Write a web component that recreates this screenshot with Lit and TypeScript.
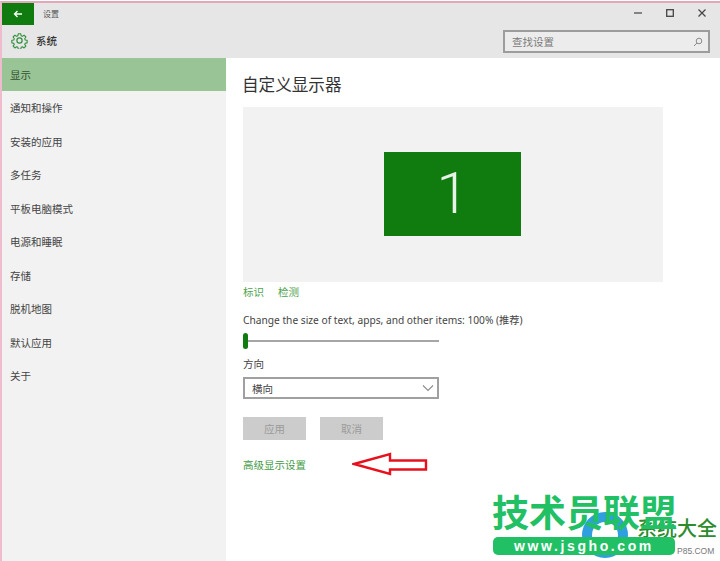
import { LitElement, html, css } from "lit";
import { customElement } from "lit/decorators.js";

const NAV = ["显示", "通知和操作", "安装的应用", "多任务", "平板电脑模式", "电源和睡眠", "存储", "脱机地图", "默认应用", "关于"];

@customElement("app-root")
export class AppRoot extends LitElement {
  static styles = css`
    :host {
      display: block;
      width: 720px;
      height: 561px;
      overflow: hidden;
      position: relative;
      background: #fff;
      font-family: "Noto Sans CJK SC", "Liberation Sans", sans-serif;
      color: #3a3a3a;
    }
    .window {
      width: 720px;
      height: 560px;
      margin-top: 1px;
      box-sizing: border-box;
      border-top: 2px solid #e3a9bb;
      border-left: 2px solid #eebccd;
      display: flex;
      flex-direction: column;
    }
    .titlebar {
      height: 55px;
      background: #e6e6e6;
      display: grid;
      grid-template-columns: 1fr 217px;
      grid-template-rows: 22px 33px;
      flex: none;
    }
    .tl { display: flex; align-items: stretch; }
    .back {
      width: 32px;
      background: #107c10;
      display: flex;
      align-items: center;
      justify-content: center;
    }
    .title { font-size: 8px; margin-left: 9px; line-height: 21px; color: #555; }
    .controls { display: flex; justify-content: flex-end; align-items: center; padding-right: 14px; gap: 24px; height: 20px; }
    .sys { display: flex; align-items: center; padding-left: 9px; gap: 8px; font-size: 10.5px; font-weight: 500; color: #333; padding-bottom: 3px; }
    .searchcell { padding-top: 5px; }
    .search {
      width: 207px;
      height: 23px;
      box-sizing: border-box;
      border: 2px solid #9c9c9c;
      background: #ececec;
      display: flex;
      align-items: center;
      justify-content: space-between;
      padding: 0 5px 0 7px;
      font-size: 10.5px;
      color: #7a7a7a;
    }
    .main { flex: 1; display: flex; min-height: 0; }
    .side { width: 224px; background: #f2f2f2; flex: none; }
    .nav {
      height: 33.5px;
      display: flex;
      align-items: center;
      padding-left: 8px;
      font-size: 10.5px;
      color: #444;
    }
    .nav.on { background: #98c496; height: 33px; color: #35502f; }
    .content { flex: 1; padding: 0 0 0 17px; display: flex; flex-direction: column; align-items: flex-start; }
    h1 { font-weight: 400; font-size: 16.6px; line-height: 24px; margin: 14px 0 11px -1px; color: #333; }
    .preview {
      width: 420px;
      height: 175px;
      background: #f2f2f2;
      display: flex;
      align-items: center;
      justify-content: center;
      flex: none;
    }
    .mon {
      width: 137px;
      height: 84px;
      margin-left: -1px;
      margin-bottom: 2px;
      background: #107c10;
      color: #e8f2e8;
      font-family: Roboto, "Liberation Sans", sans-serif;
      font-weight: 300;
      font-size: 58px;
      line-height: 82px;
      text-align: center;
    }
    .links { display: flex; gap: 14px; font-size: 10.5px; line-height: 16px; margin-top: 2px; color: #4ea24e; }
    .scale { font-family: "Noto Sans", "Noto Sans CJK SC", sans-serif; font-size: 10.2px; line-height: 16px; margin-top: 12px; color: #444; white-space: nowrap; }
    .slider { position: relative; width: 196px; height: 16px; margin-top: 5px; display: flex; align-items: center; }
    .track { width: 100%; height: 2px; background: #a6a6a6; }
    .thumb { position: absolute; left: 0; top: 0; width: 5px; height: 16px; border-radius: 3px; background: #107c10; }
    .lbl { font-size: 10.5px; line-height: 16px; margin-top: 7px; color: #444; }
    .select {
      width: 196px;
      height: 22px;
      box-sizing: border-box;
      margin-top: 5px;
      border: 2px solid #a0a0a0;
      display: flex;
      align-items: center;
      justify-content: space-between;
      padding: 0 3px 0 7px;
      font-size: 10.5px;
      color: #444;
    }
    .btns { display: flex; gap: 14px; margin-top: 18px; }
    .btn {
      width: 63px;
      height: 23px;
      background: #cccccc;
      color: #9b9b9b;
      font-size: 10.5px;
      display: flex;
      align-items: center;
      justify-content: center;
    }
    .adv { display: flex; align-items: center; margin-top: 12px; gap: 45px; font-size: 10.5px; color: #3f9a45; }
    .adv span { width: 64px; white-space: nowrap; }
    .wm { position: absolute; left: 492px; top: 493px; width: 228px; height: 68px; }
    .wm .big { position: absolute; left: 0; top: -5px; font-size: 37px; line-height: 46px; font-weight: 700; color: #22c064; white-space: nowrap; }
    .wm .pill {
      position: absolute; left: 1px; top: 44px; width: 182px; height: 18px; border-radius: 5px;
      background: #22c064; color: #fff; font-family: "Liberation Sans", sans-serif; font-size: 14px; font-weight: 700;
      letter-spacing: 2.6px; line-height: 18px; text-align: center;
    }
    .wm .blue { position: absolute; left: 0; top: 0; }
    .wm .sys2 { position: absolute; left: 145px; top: 22px; font-size: 20px; line-height: 26px; color: #2e8b2e; font-weight: 500; white-space: nowrap; }
    .wm .small { position: absolute; left: 185px; top: 52px; font-family: "Liberation Sans", sans-serif; font-size: 8.5px; line-height: 12px; color: #777; }
  `;

  render() {
    return html`
      <div class="window">
        <div class="titlebar">
          <div class="tl">
            <div class="back">
              <svg width="10" height="10" viewBox="0 0 10 10" fill="none" stroke="#fff" stroke-width="1.3"><path d="M9 5H1.500M4.500 2 1.500 5l3 3"/></svg>
            </div>
            <div class="title">设置</div>
          </div>
          <div class="controls">
            <svg width="8" height="8" viewBox="0 0 8 8"><path d="M0 4h8" stroke="#444" stroke-width="1.2"/></svg>
            <svg width="8" height="8" viewBox="0 0 8 8" fill="none"><rect x=".7" y=".7" width="6.600" height="6.600" stroke="#444" stroke-width="1.3"/></svg>
            <svg width="8" height="8" viewBox="0 0 8 8"><path d="M.5.5l7 7M7.500.5l-7 7" stroke="#444" stroke-width="1.2"/></svg>
          </div>
          <div class="sys">
            <svg width="17" height="17" viewBox="0 0 24 24" fill="none" stroke="#2f8f3a" stroke-width="1.7" stroke-linejoin="round"><circle cx="12" cy="12" r="3.700"/><path d="M10 1.500h4l.6 3.200 1.900.8 2.700-1.800 2.800 2.800-1.800 2.700.8 1.900 3 .6v4l-3 .6-.8 1.900 1.800 2.700-2.800 2.800-2.700-1.800-1.900.8-.6 3h-4l-.6-3-1.900-.8-2.700 1.800-2.800-2.800 1.800-2.700-.8-1.900-3-.6v-4l3-.6.8-1.900-1.800-2.700 2.800-2.800 2.700 1.800 1.900-.8z" transform="translate(1.200 1.200) scale(.9)"/></svg>
            <span>系统</span>
          </div>
          <div class="searchcell">
            <div class="search">
              <span>查找设置</span>
              <svg width="10" height="10" viewBox="0 0 10 10" fill="none" stroke="#8a8a8a"><circle cx="6" cy="4" r="2.800"/><path d="M4 6 1 9"/></svg>
            </div>
          </div>
        </div>
        <div class="main">
          <div class="side">
            ${NAV.map((n, i) => html`<div class="nav ${i === 0 ? "on" : ""}">${n}</div>`)}
          </div>
          <div class="content">
            <h1>自定义显示器</h1>
            <div class="preview"><div class="mon">1</div></div>
            <div class="links"><span>标识</span><span>检测</span></div>
            <div class="scale">Change the size of text, apps, and other items: 100% (推荐)</div>
            <div class="slider"><div class="track"></div><div class="thumb"></div></div>
            <div class="lbl">方向</div>
            <div class="select">
              <span>横向</span>
              <svg width="12" height="8" viewBox="0 0 12 8" fill="none" stroke="#8c8c8c" stroke-width="1.1"><path d="M1 1.500 6 6.500l5-5"/></svg>
            </div>
            <div class="btns"><div class="btn">应用</div><div class="btn">取消</div></div>
            <div class="adv">
              <span>高级显示设置</span>
              <svg width="76" height="24" viewBox="0 0 76 24" fill="#fff" stroke="#e8101c" stroke-width="2.400"><path d="M2 12 38 2v6.500h36v9H38V22z"/></svg>
            </div>
          </div>
        </div>
      </div>
      <div class="wm">
        <svg class="blue" width="228" height="68" viewBox="0 0 228 68"><circle cx="113" cy="42" r="23" fill="#2f9fe0"/><circle cx="113" cy="42" r="13" fill="#fff"/></svg>
        <div class="sys2">系统大全</div>
        <div class="big">技术员联盟</div>
        <div class="pill">www.jsgho.com</div>
        <div class="small">P85.COM</div>
      </div>
    `;
  }
}
